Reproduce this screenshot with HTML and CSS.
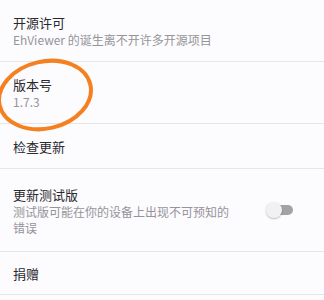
FILE: index.html
```html
<!DOCTYPE html>
<html lang="zh">
<head>
<meta charset="utf-8">
<link rel="stylesheet" href="styles.css">
</head>
<body>
<div class="list">
  <div class="item item-two">
    <div class="text">
      <div class="title">开源许可</div>
      <div class="summary">EhViewer 的诞生离不开许多开源项目</div>
    </div>
  </div>
  <div class="item item-two">
    <div class="text">
      <div class="title">版本号</div>
      <div class="summary">1.7.3</div>
    </div>
  </div>
  <div class="item item-one">
    <div class="text">
      <div class="title">检查更新</div>
    </div>
  </div>
  <div class="item item-three">
    <div class="text">
      <div class="title">更新测试版</div>
      <div class="summary">测试版可能在你的设备上出现不可预知的错误</div>
    </div>
    <div class="switch">
      <div class="track"></div>
      <div class="thumb"></div>
    </div>
  </div>
  <div class="item item-one last">
    <div class="text">
      <div class="title">捐赠</div>
    </div>
  </div>
</div>
<svg class="annotation" width="110" height="90" viewBox="0 0 110 90">
  <ellipse cx="45" cy="40" rx="46.5" ry="33.5" transform="rotate(-13 45 40)" fill="none" stroke="#f4801f" stroke-width="4"/>
</svg>
</body>
</html>
```
FILE: styles.css
```css
html, body {
  margin: 0;
  padding: 0;
  background: #fcfbfe;
}
body {
  width: 324px;
  height: 300px;
  overflow: hidden;
  position: relative;
  font-family: "Noto Sans CJK SC", "Noto Sans", Roboto, sans-serif;
}
.list {
  display: flex;
  flex-direction: column;
}
.item {
  display: flex;
  align-items: center;
  padding-left: 13px;
  border-bottom: 1px solid #e7e5ea;
  box-sizing: border-box;
}
.item-two { height: 62px; }
.item-one { height: 45px; }
.item-three { height: 83px; }
.item.last { height: 43px; }
.text {
  display: flex;
  flex-direction: column;
  width: 222px;
}
.title {
  font-size: 13px;
  line-height: 19px;
  color: #2a292e;
}
.summary {
  font-size: 12px;
  line-height: 16px;
  color: #959499;
}
.switch {
  position: relative;
  width: 27px;
  height: 16px;
  margin-left: 31px;
}
.track {
  position: absolute;
  left: 3px;
  right: 0;
  top: 3px;
  height: 10px;
  border-radius: 5px;
  background: #a3a2a6;
}
.thumb {
  position: absolute;
  left: 0;
  top: 0;
  width: 16px;
  height: 16px;
  border-radius: 50%;
  background: #f1f0f3;
  box-shadow: 0 1px 2px rgba(0,0,0,0.25);
}
.annotation {
  position: absolute;
  left: 0;
  top: 55px;
}
```
